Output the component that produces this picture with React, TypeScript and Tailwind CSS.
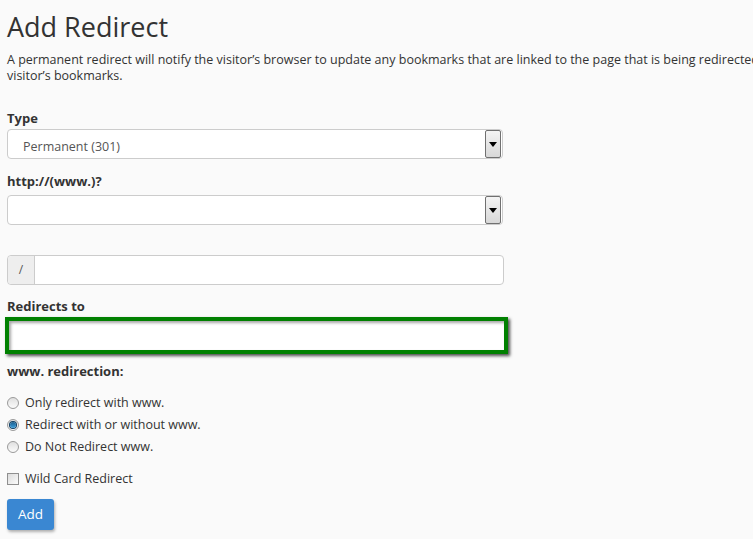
import React from 'react';

const font = { fontFamily: '"Open Sans", "Liberation Sans", sans-serif' };

function SelectBox({ value }: { value?: string }) {
  return (
    <div className="flex h-[30px] w-[496px] items-center rounded-[4px] border border-[#cccccc] bg-white pl-[15px] pr-px">
      <span className="flex-1 pt-[6px] text-[12.5px] text-[#555555]">{value}</span>
      <div className="flex h-[28px] w-[16px] items-center justify-center rounded-[2px] border border-[#707070] bg-gradient-to-b from-[#f4f4f4] to-[#d8d8d8]">
        <svg width="8" height="5" viewBox="0 0 8 5">
          <path d="M0 0h8L4 5z" fill="#000" />
        </svg>
      </div>
    </div>
  );
}

function Radio({ label, checked }: { label: string; checked?: boolean }) {
  return (
    <label className="flex h-[22px] items-center">
      <span className="ml-[7px] flex h-[12px] w-[12px] items-center justify-center rounded-full border border-[#9a9a9a] bg-gradient-to-b from-[#e0e0e0] to-[#fbfbfb]">
        {checked && <span className="h-[6px] w-[6px] rounded-full bg-gradient-to-b from-[#1b5f8f] to-[#3fa0dc] ring-1 ring-[#0d3e63]" />}
      </span>
      <span className="ml-[6px] text-[12.5px] text-[#333333]">{label}</span>
    </label>
  );
}

export default function App() {
  return (
    <div className="h-[539px] w-[753px] overflow-hidden bg-[#fafafa] pl-[7px] text-[#333333]" style={font}>
      <h1 className="mt-[10px] text-[27px] leading-[34px] font-normal">Add Redirect</h1>
      <p className="mt-[8px] whitespace-nowrap text-[12.5px] leading-[16px]">
        A permanent redirect will notify the visitor’s browser to update any bookmarks that are linked to the page that is being redirected. A temporary redirect will not update the
        <br />
        visitor’s bookmarks.
      </p>

      <div className="mt-[24px] text-[13px] leading-[20px] font-bold">Type</div>
      <div className="mt-[1px]">
        <SelectBox value="Permanent (301)" />
      </div>

      <div className="mt-[12px] text-[13px] leading-[20px] font-bold">http://(www.)?</div>
      <div className="mt-[4px]">
        <SelectBox />
      </div>

      <div className="mt-[30px] flex h-[30px] w-[497px] rounded-[4px] border border-[#cccccc] bg-white">
        <div className="flex w-[27px] items-center justify-center rounded-l-[4px] border-r border-[#cccccc] bg-[#eeeeee] text-[12px] text-[#555555]">/</div>
        <div className="flex-1" />
      </div>

      <div className="mt-[11px] text-[13px] leading-[20px] font-bold">Redirects to</div>
      <div className="-ml-[2px] mt-[1px] h-[37px] w-[503px] border-4 border-[#008000] bg-white shadow-[2px_2px_3px_rgba(0,0,0,0.7),inset_2px_2px_3px_rgba(0,0,0,0.35)]" />

      <div className="mt-[7px] text-[13px] leading-[20px] font-bold">www. redirection:</div>
      <div className="-ml-[7px] mt-[11px] flex flex-col">
        <Radio label="Only redirect with www." />
        <Radio label="Redirect with or without www." checked />
        <Radio label="Do Not Redirect www." />
      </div>

      <label className="mt-[10px] flex h-[22px] items-center">
        <span className="h-[12px] w-[12px] border border-[#8f8f8f] bg-gradient-to-br from-[#dcdcdc] to-[#fbfbfb]" />
        <span className="ml-[6px] text-[12.5px]">Wild Card Redirect</span>
      </label>

      <button className="mt-[9px] h-[31px] w-[47px] rounded-[3px] bg-[#3a87d2] text-[13.5px] text-white shadow-[1px_2px_3px_rgba(0,0,0,0.3)]">
        Add
      </button>
    </div>
  );
}
